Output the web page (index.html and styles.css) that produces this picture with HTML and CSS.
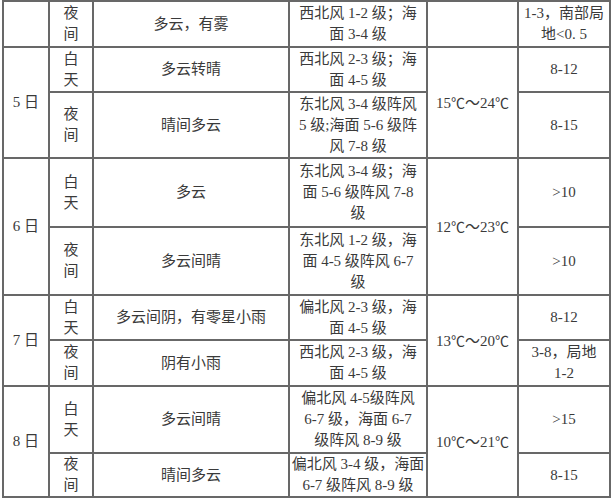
FILE: index.html
```html
<!DOCTYPE html>
<html lang="zh">
<head>
<meta charset="utf-8">
<link rel="stylesheet" href="styles.css">
</head>
<body>
<table class="forecast">
  <colgroup>
    <col class="c-day">
    <col class="c-period">
    <col class="c-weather">
    <col class="c-wind">
    <col class="c-temp">
    <col class="c-wave">
  </colgroup>
  <tbody>
    <tr class="r1">
      <td></td>
      <td>夜<br>间</td>
      <td>多云，有雾</td>
      <td>西北风 1-2 级；海<br>面 3-4 级</td>
      <td></td>
      <td>1-3，南部局<br>地&lt;0. 5</td>
    </tr>
    <tr class="r2">
      <td rowspan="2">5 日</td>
      <td>白<br>天</td>
      <td>多云转晴</td>
      <td>西北风 2-3 级；海<br>面 4-5 级</td>
      <td rowspan="2">15<span class="unit">℃</span>～24<span class="unit">℃</span></td>
      <td>8-12</td>
    </tr>
    <tr class="r3">
      <td>夜<br>间</td>
      <td>晴间多云</td>
      <td>东北风 3-4 级阵风<br>5 级;海面 5-6 级阵<br>风 7-8 级</td>
      <td>8-15</td>
    </tr>
    <tr class="r4">
      <td rowspan="2">6 日</td>
      <td>白<br>天</td>
      <td>多云</td>
      <td>东北风 3-4 级；海<br>面 5-6 级阵风 7-8<br>级</td>
      <td rowspan="2">12<span class="unit">℃</span>～23<span class="unit">℃</span></td>
      <td>&gt;10</td>
    </tr>
    <tr class="r5">
      <td>夜<br>间</td>
      <td>多云间晴</td>
      <td>东北风 1-2 级，海<br>面 4-5 级阵风 6-7<br>级</td>
      <td>&gt;10</td>
    </tr>
    <tr class="r6">
      <td rowspan="2">7 日</td>
      <td>白<br>天</td>
      <td>多云间阴，有零星小雨</td>
      <td>偏北风 2-3 级，海<br>面 4-5 级</td>
      <td rowspan="2">13<span class="unit">℃</span>～20<span class="unit">℃</span></td>
      <td>8-12</td>
    </tr>
    <tr class="r7">
      <td>夜<br>间</td>
      <td>阴有小雨</td>
      <td>西北风 2-3 级，海<br>面 4-5 级</td>
      <td>3-8，局地<br>1-2</td>
    </tr>
    <tr class="r8">
      <td rowspan="2">8 日</td>
      <td>白<br>天</td>
      <td>多云间晴</td>
      <td>偏北风 4-5级阵风<br>6-7 级，海面 6-7<br>级阵风 8-9 级</td>
      <td rowspan="2">10<span class="unit">℃</span>～21<span class="unit">℃</span></td>
      <td>&gt;15</td>
    </tr>
    <tr class="r9">
      <td>夜<br>间</td>
      <td>晴间多云</td>
      <td>偏北风 3-4 级，海面<br>6-7 级阵风 8-9 级</td>
      <td>8-15</td>
    </tr>
  </tbody>
</table>
</body>
</html>
```

FILE: styles.css
```css
html, body {
  margin: 0;
  padding: 0;
  background: #ffffff;
}

.forecast {
  margin: 0 0 0 2px;
  width: 609px;
  table-layout: fixed;
  border-collapse: collapse;
  font-family: "Liberation Serif", "Noto Sans CJK SC", serif;
  font-size: 15px;
  line-height: 21px;
  color: #3a3a3a;
}

.forecast td {
  border: 2px solid #686868;
  padding: 0;
  text-align: center;
  vertical-align: middle;
  white-space: nowrap;
}

.unit {
  font-family: "Noto Sans CJK SC", sans-serif;
  font-size: 14px;
}

.c-day { width: 46px; }
.c-period { width: 44px; }
.c-weather { width: 196px; }
.c-wind { width: 138px; }
.c-temp { width: 91px; }
.c-wave { width: 92px; }

.r1 { height: 46px; }
.r2 { height: 45px; }
.r3 { height: 66px; }
.r4 { height: 69px; }
.r5 { height: 68px; }
.r6 { height: 45px; }
.r7 { height: 46px; }
.r8 { height: 67px; }
.r9 { height: 44px; }
```
